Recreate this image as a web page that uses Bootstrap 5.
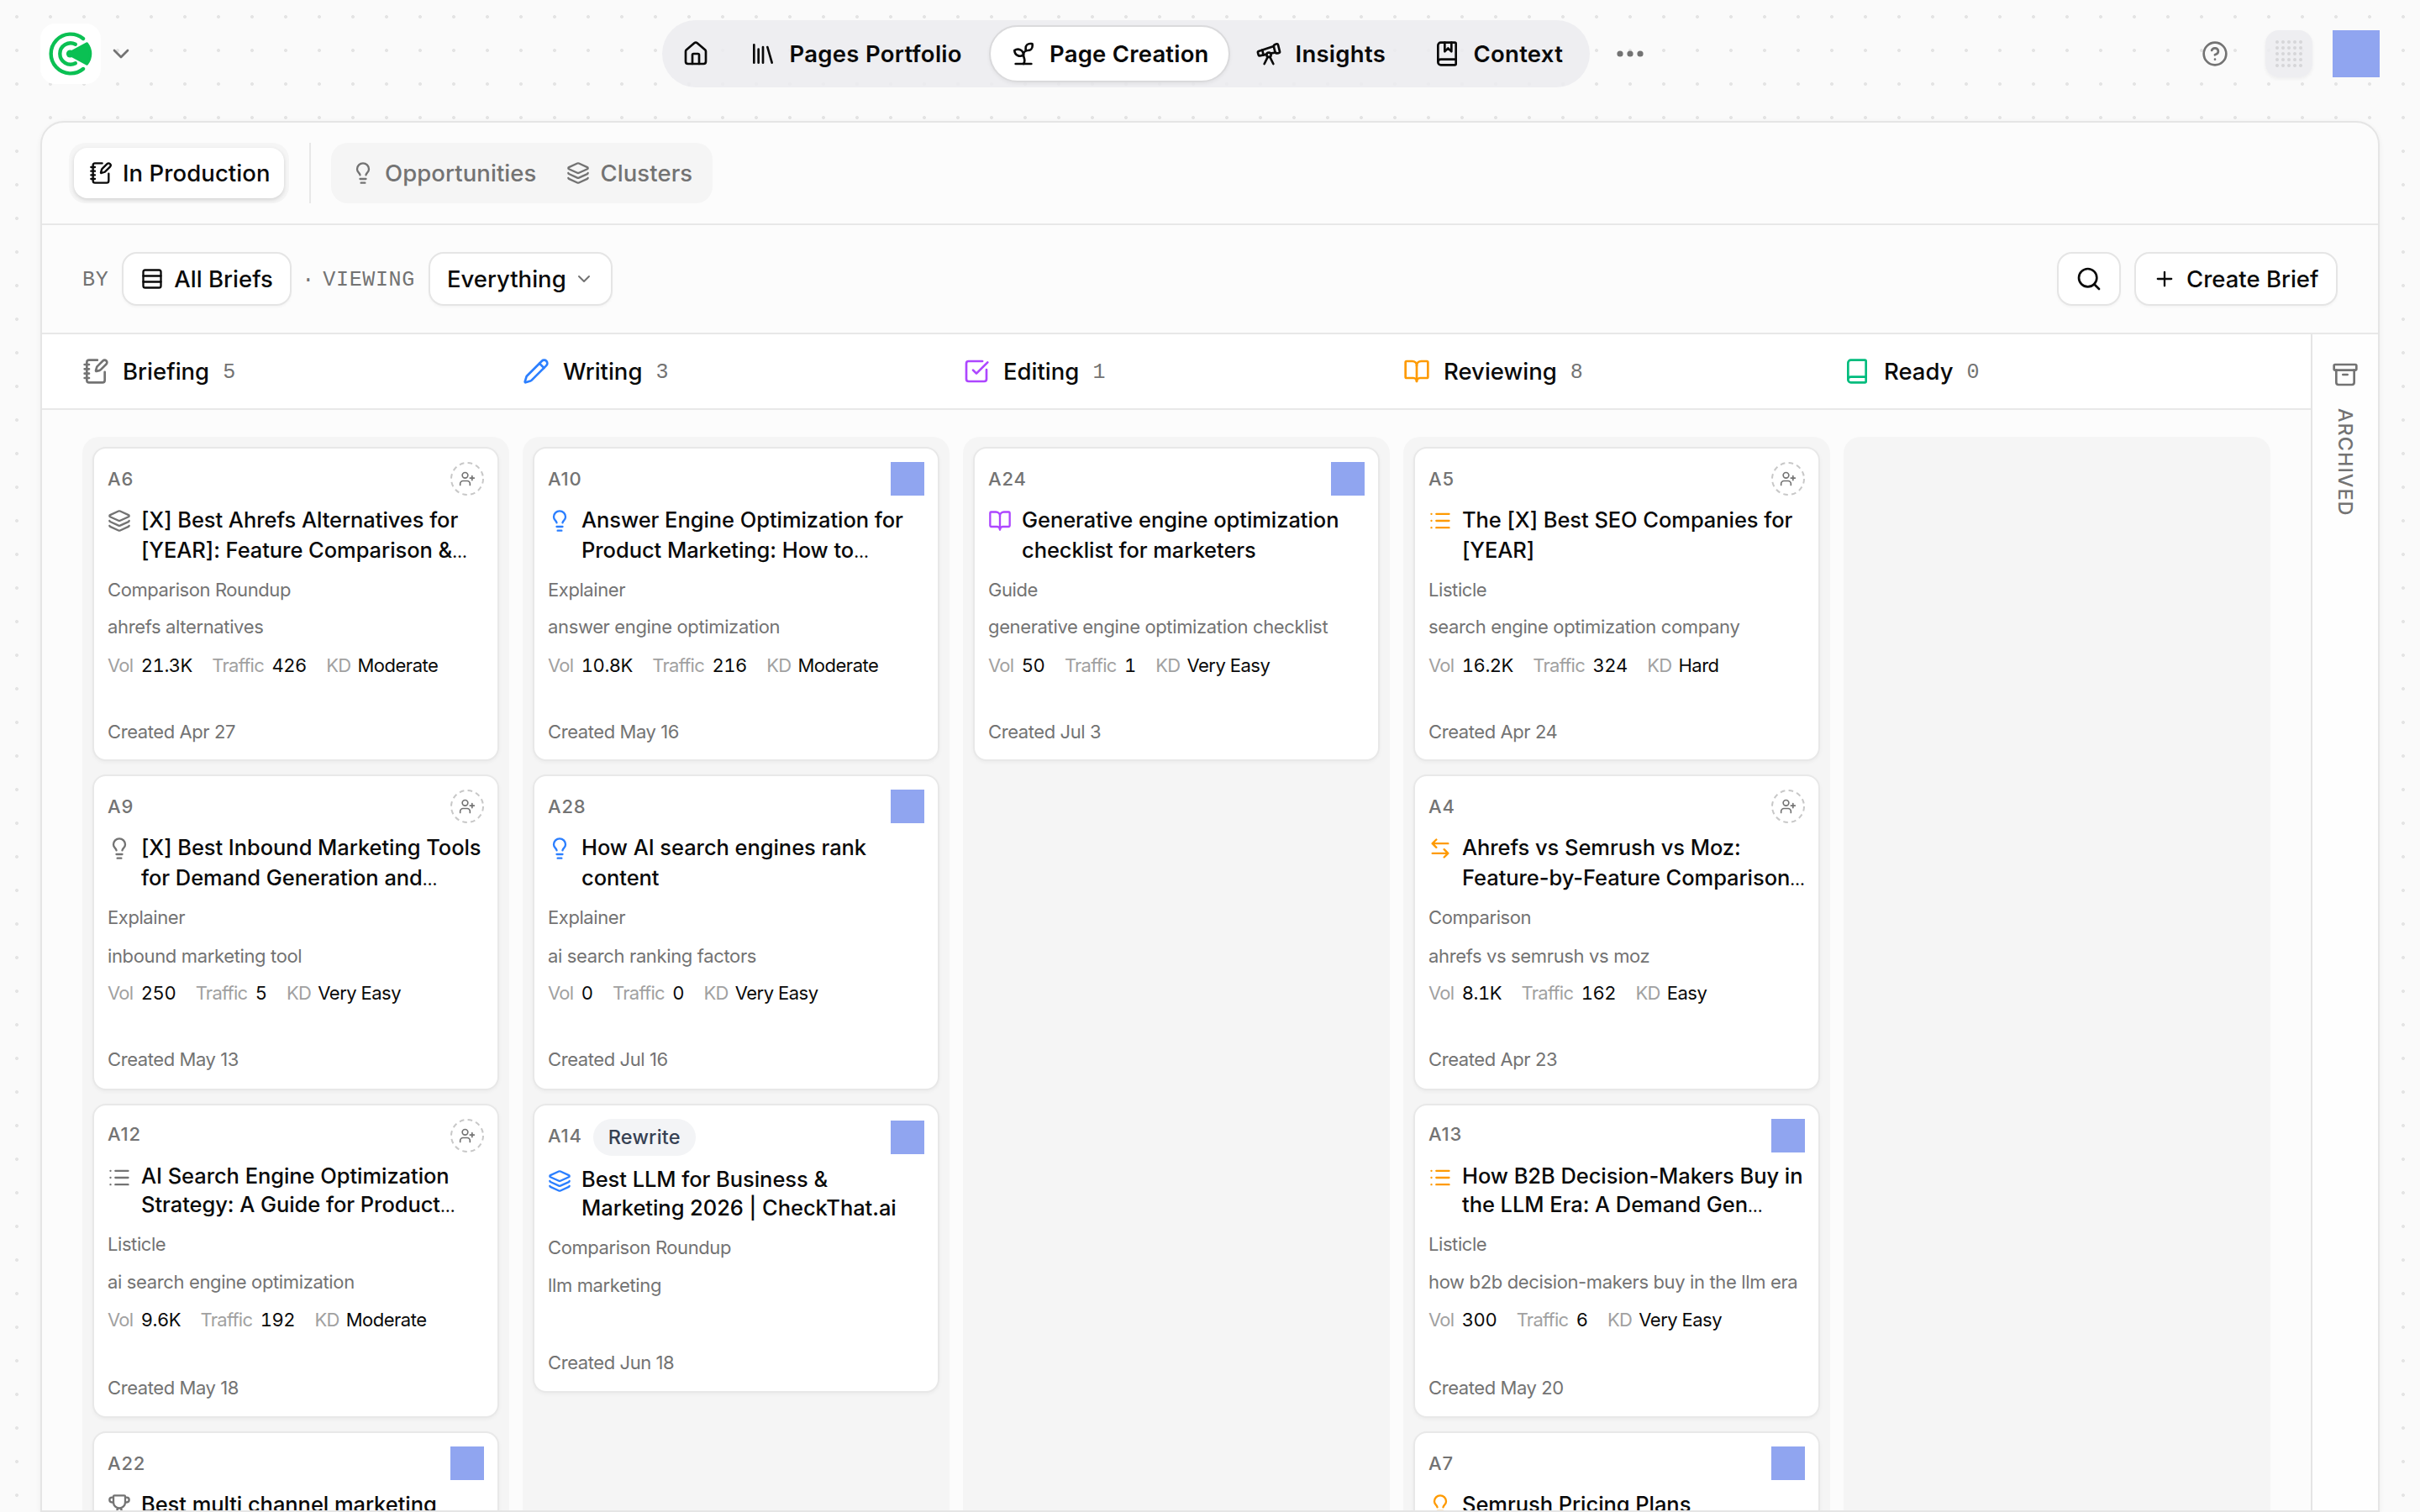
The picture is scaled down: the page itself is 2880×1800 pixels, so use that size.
<!DOCTYPE html>
<html lang="en">
<head>
<meta charset="utf-8">
<meta name="viewport" content="width=device-width, initial-scale=1">
<title>Page Creation – In Production</title>
<link href="https://cdn.jsdelivr.net/npm/bootstrap@5.3.0/dist/css/bootstrap.min.css" rel="stylesheet">
<style>
:root{--ink:#0a0a0a;--muted:#737373;--faint:#a1a1a1;--line:#e5e5e5}
html,body{height:100%}
body{font-family:Inter,"Liberation Sans",sans-serif;font-size:27.5px;font-weight:500;line-height:1.2;color:var(--ink);overflow:hidden;
  background:#fafafa radial-gradient(circle at 20px 20px,#e4e4e4 1.6px,transparent 2.3px) 0 0/40px 40px}
.ico{width:32px;height:32px;fill:none;stroke:currentColor;stroke-width:2;stroke-linecap:round;stroke-linejoin:round;flex:none;display:block}
.ico-28{width:28px;height:28px}
.ico-24{width:24px;height:24px}
.ico-40{width:40px;height:40px}
.c-gray{color:var(--muted)}.c-blue{color:#2b7fff}.c-purple{color:#ad46ff}.c-orange{color:#fe9a00}.c-green{color:#00bc7d}

.topbar{height:144px;padding:24px 48px 40px;display:grid;grid-template-columns:740px 1fr auto}
.brand-tile{width:72px;height:72px;border-radius:18px;background:#fff}
.pill-nav{height:80px;padding:0 6px;gap:6px;border-radius:40px;background:rgba(236,236,239,.88);font-weight:600;letter-spacing:.27px}
.pill-nav .nav-link{height:68px;padding:0 0 0 24px;gap:15.5px;color:var(--ink);border-radius:34px;display:flex;align-items:center;white-space:nowrap}
.pill-nav .nav-link.active{background:#fff;border:2px solid #dadadc;padding-left:23px;gap:15px;letter-spacing:.2px;box-shadow:0 2px 4px rgba(0,0,0,.05)}
.w-home{width:68px;padding-left:18px!important}.w-port{width:303px}.w-create{width:287px}.w-ins{width:206px}.w-ctx{width:204px}
.more-dots{margin-left:28px}
.apps-tile{width:56px;height:56px;margin:0 24px 0 44px;border-radius:16px;background:rgba(236,236,239,.88);box-shadow:0 2px 4px rgba(0,0,0,.05)}
.block-56{width:56px;height:56px;background:#90a5f0}
.block-40{width:40px;height:40px;background:#90a5f0}

.panel{height:1656px;margin:0 48px;border:2px solid var(--line);border-radius:28px 28px 0 0;background:#fcfcfc;box-shadow:0 2px 6px rgba(0,0,0,.06)}
.tabs-row{height:122px;padding:0 32px;gap:24px;border-bottom:2px solid #e8e8e8}
.tab-group{height:72px;padding:6px;border-radius:20px;background:#f5f5f5}
.tab-item{height:60px;padding:0 18px;gap:12px;border-radius:16px;display:flex;align-items:center;color:var(--muted);border:0;background:none;font-weight:500;letter-spacing:.08px}
.tab-item.active{background:#fff;color:var(--ink);width:250px;padding-right:0;box-shadow:0 2px 5px rgba(0,0,0,.14)}
.tab-rule{width:2px;height:72px;background:#e8e8e8}
.filter-row{height:130px;padding:0 48px;border-bottom:2px solid #e8e8e8}
.mono{font-family:"Liberation Mono",monospace;font-weight:400;font-size:25px;color:var(--muted);padding-top:3px}
.mono.wide{letter-spacing:.65px}
.tool-btn{height:64px;padding:0 20px;gap:12px;border:2px solid var(--line);border-radius:18px;background:#fff;display:flex;align-items:center;box-shadow:0 2px 3px rgba(0,0,0,.03);font-weight:500;color:var(--ink);white-space:nowrap}
.w-briefs{width:202px}.w-every{width:219px;gap:9px}.w-search{width:76px}.w-new{width:242px}
.view-label{margin-left:10px}

.board-head{height:90px;padding-left:48px;gap:16px;background:#fff;border-bottom:2px solid #e8e8e8}
.head-cell{width:508px;gap:16px}
.board{padding:32px 0 0 48px;gap:16px}
.lane{width:508px;padding:12px;gap:16px;border-radius:20px 20px 0 0;background:#f5f5f5;overflow:hidden}
.archive{width:80px;border-left:2px solid var(--line);background:#fefefe;padding-top:32px;gap:24px;font-size:23.5px;letter-spacing:.95px}
.archive span{writing-mode:vertical-rl}

.brief{height:374px;flex:none;padding:16px;border:2px solid #e8e8e8;border-radius:16px;background:#fff;box-shadow:0 2px 4px rgba(0,0,0,.04);font-size:22px;font-weight:400;line-height:33px;color:var(--muted);letter-spacing:-.42px}
.brief:nth-child(2){height:376px;padding-bottom:18px}
.brief:nth-child(3){padding-bottom:17px}
.brief.short{height:344px}
.brief-top{min-height:40px;gap:13px}
.brief-id{font-weight:500;letter-spacing:.8px}
.brief:nth-child(3) .brief-id{padding-bottom:3px}
.tag{height:44px;padding:0 18px;border-radius:22px;background:#f3f4f6;color:#364153;font-size:23.5px;font-weight:500;letter-spacing:.2px;line-height:43px}
.brief-title{margin-top:11px;gap:12px;font-size:25.5px;font-weight:500;line-height:35.75px;color:var(--ink);letter-spacing:-.06px;white-space:nowrap}
.brief:nth-child(3) .brief-title{line-height:34.4px}
.brief-title .ico{margin-top:5px}
.brief-title i{font-style:normal;font-size:.76em;line-height:1}
.brief-type{margin-top:13px}
.brief-kw{margin-top:11.7px;letter-spacing:-.36px}
.brief:nth-child(2) .brief-kw{margin-top:13px;margin-bottom:-1.3px}
.brief-stats{margin-top:12.4px;gap:23.5px}
.brief-stats span{color:var(--faint);letter-spacing:-.75px;margin-right:9.5px}
.brief-stats div:last-child span{margin-right:8px}
.brief-stats b{font-weight:400;color:var(--ink);letter-spacing:-.5px;font-variant-numeric:tabular-nums}
</style>
</head>
<body>
<svg class="d-none" xmlns="http://www.w3.org/2000/svg">
  <symbol id="house" viewBox="0 0 24 24"><path d="M15 21v-8a1 1 0 0 0-1-1h-4a1 1 0 0 0-1 1v8"/><path d="M3 10a2 2 0 0 1 .709-1.528l7-6a2 2 0 0 1 2.582 0l7 6A2 2 0 0 1 21 10v9a2 2 0 0 1-2 2H5a2 2 0 0 1-2-2z"/></symbol>
  <symbol id="library" viewBox="0 0 24 24"><path d="m16 6 4 14M12 6v14M8 8v12M4 4v16"/></symbol>
  <symbol id="sprout" viewBox="0 0 24 24"><path d="M14 9.536V7a4 4 0 0 1 4-4h1.5a.5.5 0 0 1 .5.5V5a4 4 0 0 1-4 4 4 4 0 0 0-4 4c0 2 1 3 1 5a5 5 0 0 1-1 3"/><path d="M4 9a5 5 0 0 1 8 4 5 5 0 0 1-8-4"/><path d="M5 21h14"/></symbol>
  <symbol id="telescope" viewBox="0 0 24 24"><path d="m10.065 12.493-6.18 1.318a.934.934 0 0 1-1.108-.702l-.537-2.15a1.07 1.07 0 0 1 .691-1.265l13.504-4.44"/><path d="m13.56 11.747 4.332-.924"/><path d="m16 21-3.105-6.21"/><path d="M16.485 5.94a2 2 0 0 1 1.455-2.425l1.09-.272a1 1 0 0 1 1.212.727l1.515 6.06a1 1 0 0 1-.727 1.213l-1.09.272a2 2 0 0 1-2.425-1.455z"/><path d="m6.158 8.633 1.114 4.456"/><path d="m8 21 3.105-6.21"/><circle cx="12" cy="13" r="2"/></symbol>
  <symbol id="bookmarked" viewBox="0 0 24 24"><path d="M10 2v8l3-3 3 3V2"/><path d="M4 19.5v-15A2.5 2.5 0 0 1 6.5 2H19a1 1 0 0 1 1 1v18a1 1 0 0 1-1 1H6.5a1 1 0 0 1 0-5H20"/></symbol>
  <symbol id="book" viewBox="0 0 24 24"><path d="M4 19.5v-15A2.5 2.5 0 0 1 6.5 2H19a1 1 0 0 1 1 1v18a1 1 0 0 1-1 1H6.5a1 1 0 0 1 0-5H20"/></symbol>
  <symbol id="help" viewBox="0 0 24 24"><circle cx="12" cy="12" r="10"/><path d="M9.09 9a3 3 0 0 1 5.83 1c0 2-3 3-3 3M12 17h.01"/></symbol>
  <symbol id="chevron" viewBox="0 0 24 24"><path d="m6 9 6 6 6-6"/></symbol>
  <symbol id="notebook" viewBox="0 0 24 24"><path d="M13.4 2H6a2 2 0 0 0-2 2v16a2 2 0 0 0 2 2h12a2 2 0 0 0 2-2v-7.4"/><path d="M2 6h4M2 10h4M2 14h4M2 18h4"/><path d="M21.378 5.626a1 1 0 1 0-3.004-3.004l-5.01 5.012a2 2 0 0 0-.506.854l-.837 2.87a.5.5 0 0 0 .62.62l2.87-.837a2 2 0 0 0 .854-.506z"/></symbol>
  <symbol id="bulb" viewBox="0 0 24 24"><path d="M15 14c.2-1 .7-1.7 1.5-2.5 1-.9 1.5-2.2 1.5-3.5A6 6 0 0 0 6 8c0 1 .2 2.2 1.5 3.5.7.7 1.3 1.5 1.5 2.5M9 18h6M10 22h4"/></symbol>
  <symbol id="layers" viewBox="0 0 24 24"><path d="M12.83 2.18a2 2 0 0 0-1.66 0L2.6 6.08a1 1 0 0 0 0 1.83l8.58 3.91a2 2 0 0 0 1.66 0l8.58-3.9a1 1 0 0 0 0-1.83z"/><path d="M2 12a1 1 0 0 0 .58.91l8.6 3.91a2 2 0 0 0 1.65 0l8.58-3.9A1 1 0 0 0 22 12"/><path d="M2 17a1 1 0 0 0 .58.91l8.6 3.91a2 2 0 0 0 1.65 0l8.58-3.9A1 1 0 0 0 22 17"/></symbol>
  <symbol id="rows" viewBox="0 0 24 24"><rect x="3" y="3" width="18" height="18" rx="2"/><path d="M21 9H3M21 15H3"/></symbol>
  <symbol id="search" viewBox="0 0 24 24"><circle cx="11" cy="11" r="8"/><path d="m21 21-4.34-4.34"/></symbol>
  <symbol id="plus" viewBox="0 0 24 24"><path d="M5 12h14M12 5v14"/></symbol>
  <symbol id="pencil" viewBox="0 0 24 24"><path d="M21.174 6.812a1 1 0 0 0-3.986-3.987L3.842 16.174a2 2 0 0 0-.5.83l-1.321 4.352a.5.5 0 0 0 .623.622l4.353-1.32a2 2 0 0 0 .83-.497z"/><path d="m15 5 4 4"/></symbol>
  <symbol id="check" viewBox="0 0 24 24"><path d="M21 10.656V19a2 2 0 0 1-2 2H5a2 2 0 0 1-2-2V5a2 2 0 0 1 2-2h12.344"/><path d="m9 11 3 3L22 4"/></symbol>
  <symbol id="open" viewBox="0 0 24 24"><path d="M12 7v14"/><path d="M3 18a1 1 0 0 1-1-1V4a1 1 0 0 1 1-1h5a4 4 0 0 1 4 4 4 4 0 0 1 4-4h5a1 1 0 0 1 1 1v13a1 1 0 0 1-1 1h-6a3 3 0 0 0-3 3 3 3 0 0 0-3-3z"/></symbol>
  <symbol id="archive" viewBox="0 0 24 24"><rect x="2" y="3" width="20" height="5" rx="1"/><path d="M4 8v11a2 2 0 0 0 2 2h12a2 2 0 0 0 2-2V8M10 12h4"/></symbol>
  <symbol id="list" viewBox="0 0 24 24"><path d="M3 5h.01M3 12h.01M3 19h.01M8 5h13M8 12h13M8 19h13"/></symbol>
  <symbol id="swap" viewBox="0 0 24 24"><path d="M8 3 4 7l4 4M4 7h16M16 21l4-4-4-4M20 17H4"/></symbol>
  <symbol id="trophy" viewBox="0 0 24 24"><path d="M10 14.66v1.626a2 2 0 0 1-.976 1.696A5 5 0 0 0 7 21.978M14 14.66v1.626a2 2 0 0 0 .976 1.696A5 5 0 0 1 17 21.978M18 9h1.5a1 1 0 0 0 0-5H18M4 22h16M6 9a6 6 0 0 0 12 0V3a1 1 0 0 0-1-1H7a1 1 0 0 0-1 1zM6 9H4.5a1 1 0 0 1 0-5H6"/></symbol>
  <symbol id="assign" viewBox="0 0 40 40"><circle cx="20" cy="20" r="19" stroke="#c8c8c8" stroke-width="2" stroke-dasharray="5.6 4.35" stroke-linecap="butt"/><g transform="translate(10 10) scale(.8333)"><path d="M16 21v-2a4 4 0 0 0-4-4H6a4 4 0 0 0-4 4v2M19 8v6M22 11h-6"/><circle cx="9" cy="7" r="4"/></g></symbol>
</svg>

<header class="topbar">
  <div class="d-flex align-items-center">
    <div class="brand-tile d-flex align-items-center justify-content-center">
      <svg width="52" height="52" viewBox="-26 -26 52 52" fill="none" stroke="#0bc053" stroke-width="4.4" stroke-linecap="round" stroke-linejoin="round">
        <path d="M15-18A23.4 23.4 0 1 0 15 18"/>
        <path d="M5.8-11.3A12.7 12.7 0 1 0 5.8 11.3"/>
        <circle cx="-.6" cy="0" r="4.5" fill="#0bc053" stroke="none"/>
        <path d="M0-1.6 19.4-12Q23.6-6.5 23.6 0T19.4 12L0 1.6Z" fill="#0bc053" stroke-width="3.4"/>
      </svg>
    </div>
    <svg class="ico ms-2 c-gray"><use href="#chevron"/></svg>
  </div>
  <div class="d-flex align-items-center">
    <nav class="nav pill-nav align-items-center flex-nowrap">
      <a class="nav-link w-home"><svg class="ico"><use href="#house"/></svg></a>
      <a class="nav-link w-port"><svg class="ico"><use href="#library"/></svg>Pages Portfolio</a>
      <a class="nav-link active w-create"><svg class="ico"><use href="#sprout"/></svg>Page Creation</a>
      <a class="nav-link w-ins"><svg class="ico"><use href="#telescope"/></svg>Insights</a>
      <a class="nav-link w-ctx"><svg class="ico"><use href="#bookmarked"/></svg>Context</a>
    </nav>
    <svg class="more-dots c-gray" width="40" height="40" viewBox="0 0 40 40" fill="currentColor"><circle cx="8" cy="20" r="3.6"/><circle cx="20" cy="20" r="3.6"/><circle cx="32" cy="20" r="3.6"/></svg>
  </div>
  <div class="d-flex align-items-center">
    <svg class="ico c-gray"><use href="#help"/></svg>
    <div class="apps-tile d-flex align-items-center justify-content-center">
      <svg width="32" height="32" viewBox="0 0 32 32">
        <defs><pattern id="dots" width="7" height="7" patternUnits="userSpaceOnUse"><circle cx="2" cy="2" r="2" fill="#d6d6d8"/></pattern></defs>
        <rect width="32" height="32" fill="url(#dots)"/>
      </svg>
    </div>
    <div class="block-56"></div>
  </div>
</header>

<main class="panel d-flex flex-column overflow-hidden">
  <div class="tabs-row d-flex align-items-center flex-shrink-0">
    <div class="tab-group"><button class="tab-item active"><svg class="ico ico-28"><use href="#notebook"/></svg>In Production</button></div>
    <div class="tab-rule"></div>
    <div class="tab-group d-flex">
      <button class="tab-item"><svg class="ico ico-28"><use href="#bulb"/></svg>Opportunities</button>
      <button class="tab-item"><svg class="ico ico-28"><use href="#layers"/></svg>Clusters</button>
    </div>
  </div>

  <div class="filter-row d-flex align-items-center flex-shrink-0">
    <span class="mono wide">BY</span>
    <button class="tool-btn w-briefs ms-3"><svg class="ico ico-28"><use href="#rows"/></svg>All Briefs</button>
    <span class="mono ms-2 ps-1">·</span>
    <span class="mono wide view-label">VIEWING</span>
    <button class="tool-btn w-every ms-3"><span>Everything</span><svg class="ico ico-24 c-gray ms-auto"><use href="#chevron"/></svg></button>
    <button class="tool-btn w-search ms-auto justify-content-center"><svg class="ico"><use href="#search"/></svg></button>
    <button class="tool-btn w-new ms-3"><svg class="ico ico-28"><use href="#plus"/></svg>Create Brief</button>
  </div>

  <div class="d-flex flex-grow-1 overflow-hidden">
    <section class="d-flex flex-column flex-grow-1 overflow-hidden">
      <div class="board-head d-flex align-items-center flex-shrink-0" id="heads"></div>
      <div class="board d-flex flex-grow-1 overflow-hidden" id="board"></div>
    </section>
    <aside class="archive d-flex flex-column align-items-center c-gray flex-shrink-0">
      <svg class="ico"><use href="#archive"/></svg>
      <span>ARCHIVED</span>
    </aside>
  </div>
</main>

<script src="https://cdn.jsdelivr.net/npm/bootstrap@5.3.0/dist/js/bootstrap.bundle.min.js"></script>
<script>
// id, assigned, icon, title lines, type, keyword, [vol, traffic, kd], created, tag
const lanes = [
  {name:'Briefing', count:5, icon:'notebook', color:'gray', briefs:[
    ['A6',0,'layers','[X] Best Ahrefs Alternatives for<br>[YEAR]: Feature Comparison &amp;…','Comparison Roundup','ahrefs alternatives',['21.3K','426','Moderate'],'Apr 27'],
    ['A9',0,'bulb','[X] Best Inbound Marketing Tools<br>for Demand Generation and…','Explainer','inbound marketing tool',['250','5','Very Easy'],'May 13'],
    ['A12',0,'list','AI Search Engine Optimization<br>Strategy: A Guide for Product…','Listicle','ai search engine optimization',['9.6K','192','Moderate'],'May 18'],
    ['A22',1,'trophy','Best multi channel marketing','','',null,'']]},
  {name:'Writing', count:3, icon:'pencil', color:'blue', briefs:[
    ['A10',1,'bulb','Answer Engine Optimization for<br>Product Marketing: How to…','Explainer','answer engine optimization',['10.8K','216','Moderate'],'May 16'],
    ['A28',1,'bulb','How AI search engines rank<br>content','Explainer','ai search ranking factors',['0','0','Very Easy'],'Jul 16'],
    ['A14',1,'layers','Best LLM for Business &amp;<br>Marketing 2026 | CheckThat.ai','Comparison Roundup','llm marketing',null,'Jun 18','Rewrite']]},
  {name:'Editing', count:1, icon:'check', color:'purple', briefs:[
    ['A24',1,'open','Generative engine optimization<br>checklist for marketers','Guide','generative engine optimization checklist',['50','1','Very Easy'],'Jul 3']]},
  {name:'Reviewing', count:8, icon:'open', color:'orange', briefs:[
    ['A5',0,'list','The [X] Best SEO Companies for<br>[YEAR]','Listicle','search engine optimization company',['16.2K','324','Hard'],'Apr 24'],
    ['A4',0,'swap','Ahrefs vs Semrush vs Moz:<br>Feature-by-Feature Comparison…','Comparison','ahrefs vs semrush vs moz',['8.1K','162','Easy'],'Apr 23'],
    ['A13',1,'list','How B2B Decision-Makers Buy in<br>the LLM Era: A Demand Gen…','Listicle','how b2b decision-makers buy in the llm era',['300','6','Very Easy'],'May 20'],
    ['A7',1,'bulb','Semrush Pricing Plans','','',null,'']]},
  {name:'Ready', count:0, icon:'book', color:'green', briefs:[]}
];
const ico = (n, c='') => `<svg class="ico ${c}"><use href="#${n}"/></svg>`;
const brief = (color, [id, assigned, icon, title, type, kw, stats, created, tag]) => `
  <article class="brief d-flex flex-column ${tag ? 'short' : ''}">
    <div class="brief-top d-flex align-items-center">
      <span class="brief-id">${id}</span>${tag ? `<span class="tag">${tag}</span>` : ''}
      <div class="ms-auto">${assigned ? '<div class="block-40"></div>' : ico('assign', 'ico-40 c-gray')}</div>
    </div>
    <div class="brief-title d-flex">${ico(icon, 'ico-28 c-' + color)}<div>${title.replace('…', '<i>…</i>')}</div></div>
    ${type ? `<div class="brief-type">${type}</div><div class="brief-kw">${kw}</div>` : ''}
    ${stats ? `<div class="brief-stats d-flex">${['Vol','Traffic','KD'].map((l, i) => `<div><span>${l}</span><b>${stats[i]}</b></div>`).join('')}</div>` : ''}
    ${created ? `<div class="mt-auto">Created ${created}</div>` : ''}
  </article>`;
document.getElementById('heads').innerHTML = lanes.map(l =>
  `<div class="head-cell d-flex align-items-center flex-shrink-0">${ico(l.icon, 'c-' + l.color)}<span>${l.name}</span><span class="mono">${l.count}</span></div>`).join('');
document.getElementById('board').innerHTML = lanes.map(l =>
  `<div class="lane d-flex flex-column flex-shrink-0">${l.briefs.map(b => brief(l.color, b)).join('')}</div>`).join('');
</script>
</body>
</html>
